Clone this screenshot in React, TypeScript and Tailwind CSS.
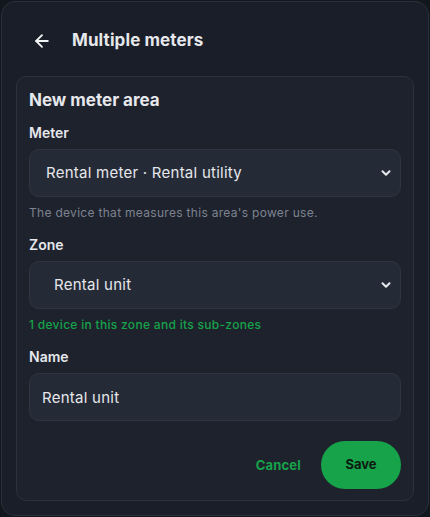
import { ArrowLeft, ChevronDown } from 'lucide-react';

const font = { fontFamily: 'Inter, "Noto Sans", sans-serif' };

function SelectField({ value, padLeft }: { value: string; padLeft: string }) {
  return (
    <div className="relative">
      <select
        defaultValue={value}
        className={`w-full h-12 appearance-none rounded-[10px] border border-[#2e3441] bg-[#252a37] ${padLeft} pr-10 text-[15px] tracking-[0.25px] text-[#e5e7eb] outline-none`}
      >
        <option>{value}</option>
      </select>
      <ChevronDown
        className="pointer-events-none absolute right-[8px] top-1/2 -translate-y-1/2 w-[14px] h-[14px] text-[#e5e7eb]"
        strokeWidth={3.5}
      />
    </div>
  );
}

export default function App() {
  return (
    <div className="w-[430px] h-[517px] bg-[#12161d] p-px" style={font}>
      <div className="h-[515px] rounded-[14px] border border-[#2a303c] bg-[#1a1e28] px-[14px] flex flex-col">
        {/* Header */}
        <div className="h-[74px] pt-[4px] flex items-center gap-[20px] pl-[16px]">
          <ArrowLeft className="w-[20px] h-[20px] text-[#f1f2f4]" strokeWidth={2.2} />
          <h1 className="text-[17px] font-bold text-[#e6e8ec] tracking-[0.1px]">Multiple meters</h1>
        </div>

        {/* Card */}
        <div className="rounded-[10px] border border-[#2b313d] bg-[#1e222d] px-[12px] pt-[11px] pb-[11px] flex flex-col">
          <h2 className="text-[17px] leading-6 font-bold text-[#e6e8ec]">New meter area</h2>

          <label className="mt-[11px] text-[14px] leading-5 font-semibold text-[#e6e8ec]">Meter</label>
          <div className="mt-[6px]">
            <SelectField value="Rental meter · Rental utility" padLeft="pl-[16px]" />
          </div>
          <p className="mt-[8px] text-[12px] leading-4 tracking-[0.3px] text-[#7d8390]">The device that measures this area's power use.</p>

          <label className="mt-[14px] text-[14px] leading-5 font-semibold text-[#e6e8ec]">Zone</label>
          <div className="mt-[6px]">
            <SelectField value="Rental unit" padLeft="pl-[24px]" />
          </div>
          <p className="mt-[8px] text-[12px] leading-4 tracking-[0.3px] font-medium text-[#16a34a]">1 device in this zone and its sub-zones</p>

          <label className="mt-[14px] text-[14px] leading-5 font-semibold text-[#e6e8ec]">Name</label>
          <input
            defaultValue="Rental unit"
            className="mt-[6px] h-12 rounded-[10px] border border-[#2e3441] bg-[#252a37] px-[12px] text-[15px] tracking-[0.25px] text-[#e5e7eb] outline-none"
          />

          <div className="mt-[20px] flex items-center justify-end gap-[20px]">
            <button className="pt-px text-[13px] font-bold tracking-[0.2px] text-[#16a34a]">Cancel</button>
            <button className="h-12 w-[80px] rounded-full bg-[#16a34a] text-[13px] font-bold text-[#0d1a12]">Save</button>
          </div>
        </div>
      </div>
    </div>
  );
}
